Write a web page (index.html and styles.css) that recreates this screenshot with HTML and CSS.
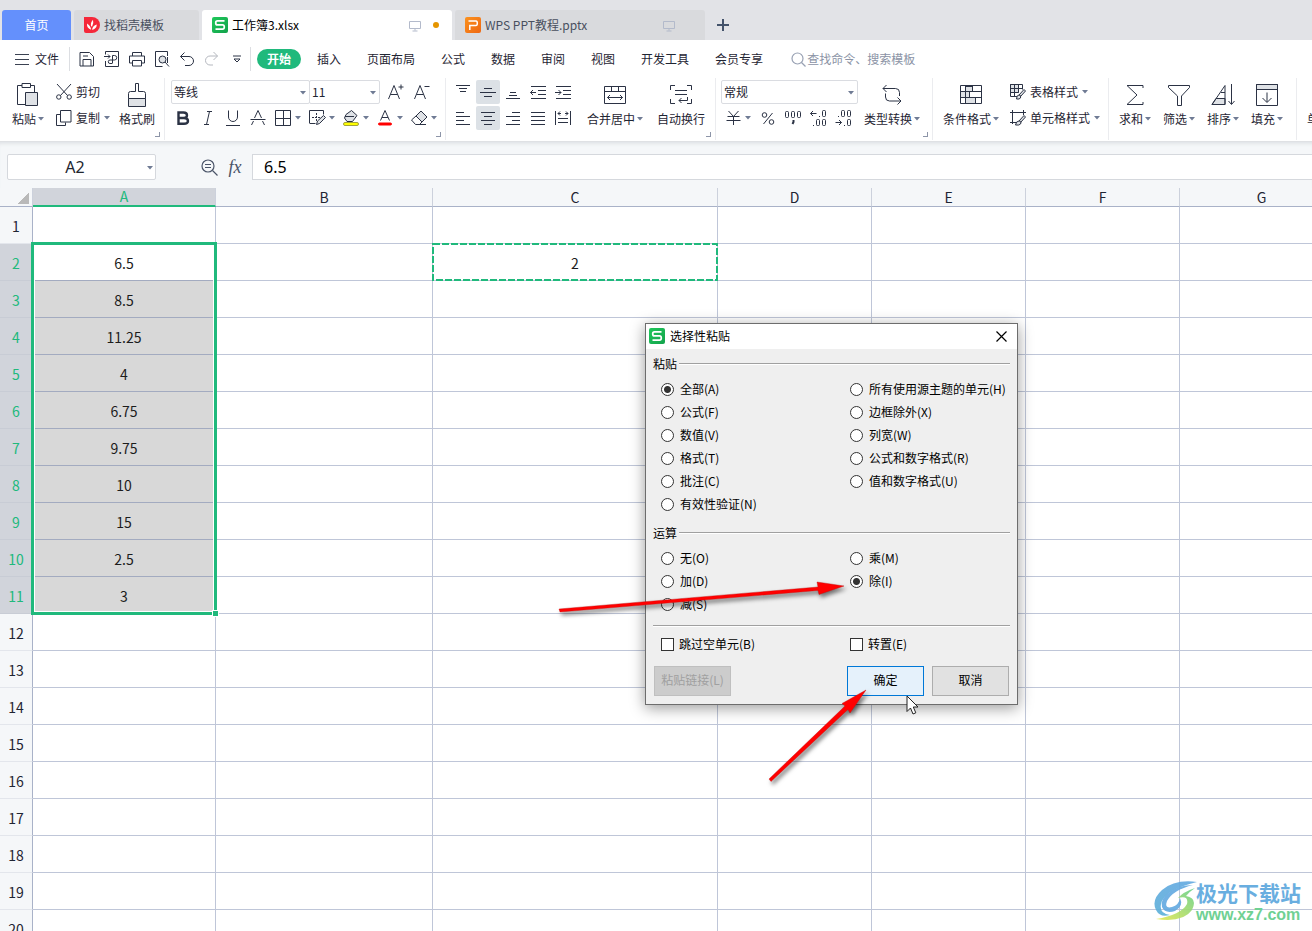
FILE: index.html
```html
<!DOCTYPE html>
<html lang="zh-CN">
<head>
<meta charset="utf-8">
<title>工作簿3.xlsx</title>
<link rel="stylesheet" href="styles.css">
</head>
<body>
<svg class="defs" aria-hidden="true">
  <defs>
    <linearGradient id="green" x1="0" y1="0" x2="1" y2="1"><stop offset="0" stop-color="#1fc85a"/><stop offset="1" stop-color="#13a24c"/></linearGradient>
    <linearGradient id="orange" x1="0" y1="0" x2="1" y2="1"><stop offset="0" stop-color="#fb921e"/><stop offset="1" stop-color="#ee6712"/></linearGradient>
    <linearGradient id="swirl" x1="0" y1="0" x2="0" y2="1"><stop offset="0" stop-color="#62a9e0"/><stop offset="1" stop-color="#5bb0d8"/></linearGradient>
    <linearGradient id="leaf" x1="0" y1="1" x2="1" y2="0"><stop offset="0" stop-color="#e8e84e"/><stop offset="1" stop-color="#62cf8c"/></linearGradient>
    <symbol id="sheet-logo" viewBox="0 0 16 16"><rect width="16" height="16" rx="2" fill="url(#green)"/><path d="M12.5 3.9H5.5Q3.7 3.9 3.7 5.9T5.5 7.9H10.5Q12.3 7.9 12.3 10T10.5 12.1H3.5" fill="none" stroke="#fff" stroke-width="1.7"/></symbol>
    <symbol id="monitor" viewBox="0 0 12 12"><path d="M.5 1.5h11v7H.5zM6 8.5v2M3.5 11h5" fill="none" stroke="currentColor"/></symbol>
    <symbol id="caret" viewBox="0 0 6 4"><path d="M0 0h6L3 3.5z" fill="#6f7b94"/></symbol>
  </defs>
</svg>

<header class="tabs">
  <button class="tab tab-home">首页</button>
  <button class="tab tab-docs"><svg width="16" height="16" viewBox="0 0 16 16"><path d="M0 0H8A8 8 0 0 1 8 16H2Q0 16 0 14z" fill="#f5283a"/><path d="M7.2 12.8Q2.6 11 3 6.4Q6.4 8.4 7.2 12.8zM7 9Q6.300 5.500 9 2.800Q10 6 8 9.800zM8 12.800Q8.800 8.500 12.800 7.500Q12.600 12 8 12.800z" fill="#fff"/></svg>找稻壳模板</button>
  <button class="tab tab-book active"><svg width="16" height="16"><use href="#sheet-logo"/></svg><span class="name">工作簿3.xlsx</span><svg class="screen" width="12" height="12"><use href="#monitor"/></svg><i class="dot"></i></button>
  <button class="tab tab-ppt"><svg width="16" height="16" viewBox="0 0 16 16"><rect width="16" height="16" rx="2" fill="url(#orange)"/><path d="M3.500 4H11Q12.300 4 12.300 6.300T11 8.600H4.800V13" fill="none" stroke="#fff" stroke-width="1.500"/></svg><span class="name">WPS PPT教程.pptx</span><svg class="screen" width="12" height="12"><use href="#monitor"/></svg></button>
  <button class="new-tab" aria-label="新建"><svg width="12" height="12" viewBox="0 0 12 12"><path d="M6 0v12M0 6h12" stroke="#44536b" stroke-width="2"/></svg></button>
</header>

<nav class="menu">
  <button class="file"><svg width="14" height="12" viewBox="0 0 14 12"><path d="M0 1.500h14M0 6.500h14M0 11.500h14" stroke="#3b4252"/></svg>文件</button>
  <div class="quick">
    <button aria-label="保存"><svg class="ic" width="16" height="16" viewBox="0 0 16 16"><path d="M1 1.500h9.500l4 4v9.500H1zM4 15V8.500h8V15M4 5h5"/></svg></button>
    <button aria-label="输出为PDF"><svg class="ic" width="16" height="16" viewBox="0 0 16 16"><path d="M1.500 3.500V.500h13v15h-13V10M0 5.500h6M4 3.500l2 2-2 2M8.500 12V4.500h2a2.200 2.200 0 0 1 0 4.500H6a1.700 1.700 0 0 0 0 3.500h2.500"/></svg></button>
    <button aria-label="打印"><svg class="ic" width="16" height="16" viewBox="0 0 16 16"><path d="M3.500 5V1.500h9V5M3.500 12H.500V5h15v7h-3M3.500 9.500h9V15h-9z"/></svg></button>
    <button aria-label="打印预览"><svg class="ic" width="16" height="16" viewBox="0 0 16 16"><path d="M13.500 5V.500H1.500v15h7"/><circle cx="8.500" cy="8.500" r="3.500" class="tint"/><path d="M13.500 6v6M11 11l4 4.500"/></svg></button>
    <button aria-label="撤销"><svg class="ic" width="16" height="16" viewBox="0 0 16 16"><path d="M5.500 1.500l-4 4 4 4M1.500 5.500h8.500a4.500 4.500 0 0 1 0 9H6"/></svg></button>
    <button aria-label="恢复"><svg class="ic faint" width="16" height="16" viewBox="0 0 16 16"><path d="M9.500 1l4 4-4 4M13.500 5H6a4.500 4.500 0 0 0 0 9h3"/></svg></button>
    <button aria-label="更多"><svg class="ic" width="8" height="8" viewBox="0 0 8 8"><path d="M0 1h8M1 4l3 3 3-3z"/></svg></button>
  </div>
  <div class="menu-tabs">
    <button class="current">开始</button><button>插入</button><button>页面布局</button><button>公式</button><button>数据</button><button>审阅</button><button>视图</button><button>开发工具</button><button>会员专享</button>
  </div>
  <label class="search"><svg width="15" height="15" viewBox="0 0 15 15"><circle cx="6.500" cy="6.500" r="5.500"/><path d="M10.500 10.500l4 4"/></svg><input type="text" placeholder="查找命令、搜索模板" aria-label="搜索"></label>
</nav>

<section class="ribbon">
  <div class="group g-clip">
    <button class="big"><svg class="ic" width="22" height="24" viewBox="0 0 22 24"><path d="M5 2.500H.500v19H8M14 2.500h3.500V9M5 .500h8.500v4H5z"/><path class="tint" d="M8.500 9.500h12v13h-12z"/></svg><span>粘贴<svg class="caret"><use href="#caret"/></svg></span></button>
    <div class="stack">
      <button class="line"><svg class="ic" width="16" height="16" viewBox="0 0 16 16"><path d="M1 0l10.500 11.500M15 0L4.500 11.500"/><circle cx="2.800" cy="13" r="2.200"/><circle cx="13.200" cy="13" r="2.200"/></svg>剪切</button>
      <button class="line"><svg class="ic" width="16" height="16" viewBox="0 0 16 16"><path d="M4.500 4.500h-4v11h9v-3M4.500.500h10.500v11.500H4.500z"/></svg>复制<svg class="caret"><use href="#caret"/></svg></button>
    </div>
    <button class="big"><svg class="ic" width="20" height="24" viewBox="0 0 20 24"><path d="M8.500.500h3v8h5q2 0 2 2v5H1.500v-5q0-2 2-2h5z"/><path class="tint" d="M1.500 15.500h17v8h-17z"/></svg><span>格式刷</span></button>
    <i class="launch"></i>
  </div>
  <div class="group g-font">
    <div class="stack">
      <div class="row combos">
        <span class="combo wide"><select aria-label="字体"><option>等线</option></select><svg class="caret"><use href="#caret"/></svg></span><span class="combo small"><select aria-label="字号"><option>11</option></select><svg class="caret"><use href="#caret"/></svg></span>
        <button class="sq" aria-label="增大字号"><svg class="ic" width="16" height="16" viewBox="0 0 16 16"><path d="M.500 15L6 1.500 11.500 15M2.500 10.500h7M10.500 3h5M13 .500v5"/></svg></button>
        <button class="sq" aria-label="减小字号"><svg class="ic" width="16" height="16" viewBox="0 0 16 16"><path d="M.500 15L6 1.500 11.500 15M2.500 10.500h7M10.500 2.500h5"/></svg></button>
      </div>
      <div class="row">
        <button class="sq" aria-label="加粗"><svg class="ic" width="14" height="16" viewBox="0 0 14 16"><path stroke-width="2.400" d="M2.500 2.500h5q3.500 0 3.500 2.700t-3.500 2.800h-5h5.500q4 0 4 2.900t-4 2.900h-5.500z"/></svg></button>
        <button class="sq" aria-label="倾斜"><svg class="ic" width="14" height="16" viewBox="0 0 14 16"><path d="M6 1.500h5M3 14.500h5M8.500 1.500l-3 13"/></svg></button>
        <button class="sq" aria-label="下划线"><svg class="ic" width="16" height="16" viewBox="0 0 16 16"><path d="M3.500.500v6.500a4.500 4.500 0 0 0 9 0V.500M1 15.500h14"/></svg></button>
        <button class="sq" aria-label="删除线"><svg class="ic" width="16" height="16" viewBox="0 0 16 16"><path d="M4.500 8L8 .500 11.500 8M.500 9.500h15M3.500 11L1.500 15M12.500 11l2 4"/></svg></button>
        <button class="drop" aria-label="边框"><svg class="ic" width="18" height="16" viewBox="0 0 18 16"><path d="M1.500.500h15v15h-15zM9.500.500v15M1.500 8.500h15"/></svg><svg class="caret"><use href="#caret"/></svg></button>
        <button class="drop" aria-label="绘图边框"><svg class="ic" width="18" height="16" viewBox="0 0 18 16"><path d="M1.500 13V.500h14v4M1.500 13.500h6"/><path stroke-dasharray="2 1" d="M8.500 3v8M4 7.500h8"/><path class="tint" d="M8.500 14.500l1-3.500 6-5.500 2 2-6 6z"/></svg><svg class="caret"><use href="#caret"/></svg></button>
        <button class="drop" aria-label="填充颜色"><svg class="ic" width="18" height="16" viewBox="0 0 18 16"><path class="tint" d="M4 4.500L9.500.500l5.500 5-4.500 6H5L2.500 8z"/><path d="M3 6.500h9"/><rect class="yellow" x="1.500" y="12.500" width="15" height="3" rx="1.500"/></svg><svg class="caret"><use href="#caret"/></svg></button>
        <button class="drop" aria-label="字体颜色"><svg class="ic" width="18" height="16" viewBox="0 0 18 16"><path d="M4.500 10.500L9 .500l4.500 10M6 7.500h6"/><rect class="red" x="2.500" y="13" width="13" height="2" rx="1"/></svg><svg class="caret"><use href="#caret"/></svg></button>
        <button class="drop" aria-label="清除"><svg class="ic" width="18" height="16" viewBox="0 0 18 16"><path class="tint" d="M6 6l5-5 6 6-5 5z"/><path d="M6 6l-4.500 4 4 4.500h4l2.500-2.500M9 14.500h7"/></svg><svg class="caret"><use href="#caret"/></svg></button>
      </div>
    </div>
    <i class="launch"></i>
  </div>
  <div class="group g-align">
    <div class="stack">
      <div class="row">
        <button class="sq" aria-label="顶端对齐"><svg class="ic" width="14" height="16" viewBox="0 0 14 16"><path d="M0 1.500h14M3 4.500h8M4 7.500h6"/></svg></button>
        <button class="sq on" aria-label="垂直居中"><svg class="ic" width="16" height="16" viewBox="0 0 16 16"><path d="M4 4.500h8M0 8.500h16M4 12.500h8"/></svg></button>
        <button class="sq" aria-label="底端对齐"><svg class="ic" width="14" height="16" viewBox="0 0 14 16"><path d="M4 8.500h6M3 11.500h8M0 14.500h14"/></svg></button>
        <button class="sq" aria-label="减少缩进"><svg class="ic" width="16" height="16" viewBox="0 0 16 16"><path d="M1 2.500h15M8 6.500h8M8 10.500h8M1 14.500h15M.500 8.500H6M3 6L.500 8.500 3 11"/></svg></button>
        <button class="sq" aria-label="增加缩进"><svg class="ic" width="16" height="16" viewBox="0 0 16 16"><path d="M1 2.500h15M8 6.500h8M8 10.500h8M1 14.500h15M0 8.500h6M3.500 6L6 8.500 3.500 11"/></svg></button>
      </div>
      <div class="row">
        <button class="sq" aria-label="左对齐"><svg class="ic" width="14" height="16" viewBox="0 0 14 16"><path d="M0 2.500h8M0 6.500h14M0 10.500h8M0 14.500h14"/></svg></button>
        <button class="sq on" aria-label="水平居中"><svg class="ic" width="14" height="16" viewBox="0 0 14 16"><path d="M0 2.500h14M3 6.500h8M0 10.500h14M3 14.500h8"/></svg></button>
        <button class="sq" aria-label="右对齐"><svg class="ic" width="14" height="16" viewBox="0 0 14 16"><path d="M6 2.500h8M0 6.500h14M6 10.500h8M0 14.500h14"/></svg></button>
        <button class="sq" aria-label="两端对齐"><svg class="ic" width="14" height="16" viewBox="0 0 14 16"><path d="M0 2.500h14M0 6.500h14M0 10.500h14M0 14.500h14"/></svg></button>
        <button class="sq" aria-label="分散对齐"><svg class="ic" width="16" height="16" viewBox="0 0 16 16"><path d="M.500 1v14M15.500 1v14M3 8.500h10M3 12.500h10M3 3.500h3M10 3.500h3M5 1.500l-2 2 2 2M11 1.500l2 2-2 2"/></svg></button>
      </div>
    </div>
    <button class="big"><svg class="ic" width="22" height="24" viewBox="0 0 22 24"><path d="M.500 3.500h21v17H.500zM.500 8.500h21M7.500 3.500v5M14.500 3.500v5M3.500 14.500h15M6 12l-2.500 2.500L6 17M16 12l2.500 2.500L16 17"/></svg><span>合并居中<svg class="caret"><use href="#caret"/></svg></span></button>
    <button class="big"><svg class="ic" width="22" height="24" viewBox="0 0 22 24"><path d="M5 2.500H.500V7M17 2.500h4.500V7M.500 16v4.500H5M21.500 16v4.500H17M5 7.500h12M5 11.500h12M17.500 14v3.500H9M11.500 15L9 17.500l2.500 2.500"/></svg><span>自动换行</span></button>
    <i class="launch"></i>
  </div>
  <div class="group g-num">
    <div class="stack">
      <div class="row"><span class="combo full"><select aria-label="数字格式"><option>常规</option></select><svg class="caret"><use href="#caret"/></svg></span></div>
      <div class="row">
        <button class="drop" aria-label="货币"><svg class="ic" width="18" height="16" viewBox="0 0 18 16"><path d="M4.500 1L9.500 6.500 14.500 1M3.500 6.500h12M2.500 10.500h14M9.500 6.500V15"/></svg><svg class="caret"><use href="#caret"/></svg></button>
        <button class="sq" aria-label="百分比"><svg class="ic" width="14" height="16" viewBox="0 0 14 16"><circle cx="3.500" cy="5" r="2.300"/><circle cx="10.500" cy="12" r="2.300"/><path d="M11.500 3L2.500 14"/></svg></button>
        <button class="sq" aria-label="千位分隔"><svg class="ic" width="18" height="16" viewBox="0 0 18 16"><rect x="1.500" y="1.500" width="3" height="6" rx="1"/><rect x="7.500" y="1.500" width="3" height="6" rx="1"/><rect x="13.500" y="1.500" width="3" height="6" rx="1"/><path stroke-width="2" d="M9.500 10v2l-1 2"/></svg></button>
        <button class="sq" aria-label="增加小数位"><svg class="ic" width="16" height="16" viewBox="0 0 16 16"><path d="M.500 3.500h6M3 1L.500 3.500 3 6M9 6.500h1M3 15.500h1"/><rect x="12.500" y=".500" width="3" height="6" rx="1"/><rect x="6.500" y="9.500" width="3" height="6" rx="1"/><rect x="12.500" y="9.500" width="3" height="6" rx="1"/></svg></button>
        <button class="sq" aria-label="减少小数位"><svg class="ic" width="16" height="16" viewBox="0 0 16 16"><path d="M.500 12.500h6M4 10l2.500 2.500L4 15M3 6.500h1M9 15.500h1"/><rect x="6.500" y=".500" width="3" height="6" rx="1"/><rect x="12.500" y=".500" width="3" height="6" rx="1"/><rect x="12.500" y="9.500" width="3" height="6" rx="1"/></svg></button>
      </div>
    </div>
    <button class="big"><svg class="ic" width="20" height="24" viewBox="0 0 20 24"><path d="M4.500 2L1 5.500 4.500 9M1 5.500h12.500q4 0 4 4V13M15.500 14.500L19 18l-3.500 3.500M19 18H7.500q-4 0-4-4v-3.500"/></svg><span>类型转换<svg class="caret"><use href="#caret"/></svg></span></button>
    <i class="launch"></i>
  </div>
  <div class="group g-style">
    <button class="big"><svg class="ic" width="22" height="24" viewBox="0 0 22 24"><path class="tint" d="M5.500 3.500h7v5h-7zM.500 8.500h9v6h-9zM5.500 14.500h10v6h-10z"/><path d="M.500 2.500h21v18H.500zM.500 8.500h21M.500 14.500h21M5.500 2.500v18M12.500 2.500v6M9.500 8.500v6M15.500 14.500v6"/></svg><span>条件格式<svg class="caret"><use href="#caret"/></svg></span></button>
    <div class="stack">
      <button class="line"><svg class="ic" width="16" height="16" viewBox="0 0 16 16"><path class="tint" d="M.500.500h8v8h-8z"/><path d="M7 12.500H.500V.500h12v5M4.500.500v12M8.500.500v8M.500 4.500h12M.500 8.500h7"/><path class="tint" d="M9 11l5-5.500 1.500 1.500-5 5.500M6.500 15q0-4 2.500-4t1.500 3q-1 1.500-4 1z"/></svg>表格样式<svg class="caret"><use href="#caret"/></svg></button>
      <button class="line"><svg class="ic" width="16" height="16" viewBox="0 0 16 16"><path d="M0 2.500h16M2.500 0v14M13.500 0v5M0 12.500h6"/><path class="tint" d="M9 11l5-5.500 1.500 1.500-5 5.500M5.500 15q.500-4 3.500-4t1.500 3q-1 1.500-5 1z"/></svg>单元格样式<svg class="caret"><use href="#caret"/></svg></button>
    </div>
  </div>
  <div class="group g-edit">
    <button class="big"><svg class="ic" width="20" height="24" viewBox="0 0 20 24"><path d="M18 5V2.500H2L12 12 2 21.500h16V19"/></svg><span>求和<svg class="caret"><use href="#caret"/></svg></span></button>
    <button class="big"><svg class="ic" width="22" height="24" viewBox="0 0 22 24"><path d="M.500 2.500h21v2l-8 8.500v9.500h-4V13L.500 4.500z"/></svg><span>筛选<svg class="caret"><use href="#caret"/></svg></span></button>
    <button class="big"><svg class="ic" width="24" height="24" viewBox="0 0 24 24"><path class="tint" d="M5 15.500h9v6H1z"/><path d="M14 2.500v19H1zM10 9.500h4M5 15.500h9M20.500 1v20M17.500 18l3 3.500 3-3.500"/></svg><span>排序<svg class="caret"><use href="#caret"/></svg></span></button>
    <button class="big"><svg class="ic" width="22" height="24" viewBox="0 0 22 24"><path class="tint" d="M.500 1.500h21v5H.500z"/><path d="M.500 1.500h21v21H.500zM11 9.500V19M6.500 15l4.500 4.500 4.500-4.500"/></svg><span>填充<svg class="caret"><use href="#caret"/></svg></span></button>
  </div>
  <div class="group g-cell"><button class="big"><svg class="ic" width="22" height="24"></svg><span>单元格</span></button></div>
</section>

<section class="formula">
  <span class="namebox"><input type="text" value="A2" aria-label="名称框"><svg class="caret"><use href="#caret"/></svg></span>
  <button class="find" aria-label="查找"><svg width="17" height="17" viewBox="0 0 17 17"><circle cx="7" cy="7" r="6"/><path d="M11.500 11.500l5 5M4 5.500h6M4 8.500h6"/></svg></button>
  <button class="fx">fx</button>
  <input class="content" type="text" value="6.5" aria-label="编辑栏">
</section>

<main class="sheet">
  <table>
    <colgroup><col class="c-head"><col class="c-a"><col class="c-b"><col class="c-c"><col class="c-d"><col class="c-d"><col class="c-d"><col class="c-g"></colgroup>
    <thead><tr><th class="corner"></th><th class="sel">A</th><th>B</th><th>C</th><th>D</th><th>E</th><th>F</th><th>G</th></tr></thead>
    <tbody>
      <tr><th>1</th><td></td><td></td><td></td><td></td><td></td><td></td><td></td></tr>
      <tr class="hit first"><th>2</th><td>6.5</td><td></td><td>2</td><td></td><td></td><td></td><td></td></tr>
      <tr class="hit"><th>3</th><td>8.5</td><td></td><td></td><td></td><td></td><td></td><td></td></tr>
      <tr class="hit"><th>4</th><td>11.25</td><td></td><td></td><td></td><td></td><td></td><td></td></tr>
      <tr class="hit"><th>5</th><td>4</td><td></td><td></td><td></td><td></td><td></td><td></td></tr>
      <tr class="hit"><th>6</th><td>6.75</td><td></td><td></td><td></td><td></td><td></td><td></td></tr>
      <tr class="hit"><th>7</th><td>9.75</td><td></td><td></td><td></td><td></td><td></td><td></td></tr>
      <tr class="hit"><th>8</th><td>10</td><td></td><td></td><td></td><td></td><td></td><td></td></tr>
      <tr class="hit"><th>9</th><td>15</td><td></td><td></td><td></td><td></td><td></td><td></td></tr>
      <tr class="hit"><th>10</th><td>2.5</td><td></td><td></td><td></td><td></td><td></td><td></td></tr>
      <tr class="hit"><th>11</th><td>3</td><td></td><td></td><td></td><td></td><td></td><td></td></tr>
      <tr><th>12</th><td></td><td></td><td></td><td></td><td></td><td></td><td></td></tr>
      <tr><th>13</th><td></td><td></td><td></td><td></td><td></td><td></td><td></td></tr>
      <tr><th>14</th><td></td><td></td><td></td><td></td><td></td><td></td><td></td></tr>
      <tr><th>15</th><td></td><td></td><td></td><td></td><td></td><td></td><td></td></tr>
      <tr><th>16</th><td></td><td></td><td></td><td></td><td></td><td></td><td></td></tr>
      <tr><th>17</th><td></td><td></td><td></td><td></td><td></td><td></td><td></td></tr>
      <tr><th>18</th><td></td><td></td><td></td><td></td><td></td><td></td><td></td></tr>
      <tr><th>19</th><td></td><td></td><td></td><td></td><td></td><td></td><td></td></tr>
      <tr><th>20</th><td></td><td></td><td></td><td></td><td></td><td></td><td></td></tr>
    </tbody>
  </table>
  <div class="selection"><i></i></div>
  <svg class="marquee" width="286" height="38"><rect x="1" y="1" width="284" height="36"/></svg>

  <form class="dialog" role="dialog" aria-label="选择性粘贴">
    <div class="title"><svg width="16" height="16"><use href="#sheet-logo"/></svg><span>选择性粘贴</span><button type="button" aria-label="关闭"><svg width="11" height="11" viewBox="0 0 11 11"><path d="M.500.500l10 10M10.500.500l-10 10" stroke="#000" stroke-width="1.200"/></svg></button></div>
    <div class="body">
      <div class="legend">粘贴</div>
      <div class="options six">
        <label><input type="radio" name="paste" checked>全部(A)</label>
        <label><input type="radio" name="paste">公式(F)</label>
        <label><input type="radio" name="paste">数值(V)</label>
        <label><input type="radio" name="paste">格式(T)</label>
        <label><input type="radio" name="paste">批注(C)</label>
        <label><input type="radio" name="paste">有效性验证(N)</label>
        <label><input type="radio" name="paste">所有使用源主题的单元(H)</label>
        <label><input type="radio" name="paste">边框除外(X)</label>
        <label><input type="radio" name="paste">列宽(W)</label>
        <label><input type="radio" name="paste">公式和数字格式(R)</label>
        <label><input type="radio" name="paste">值和数字格式(U)</label>
      </div>
      <div class="legend second">运算</div>
      <div class="options three">
        <label><input type="radio" name="op">无(O)</label>
        <label><input type="radio" name="op">加(D)</label>
        <label><input type="radio" name="op">减(S)</label>
        <label><input type="radio" name="op">乘(M)</label>
        <label><input type="radio" name="op" checked>除(I)</label>
      </div>
      <hr>
      <div class="options one">
        <label><input type="checkbox">跳过空单元(B)</label>
        <label><input type="checkbox">转置(E)</label>
      </div>
      <div class="actions">
        <button type="button" class="link" disabled>粘贴链接(L)</button>
        <button type="button" class="ok">确定</button>
        <button type="button">取消</button>
      </div>
    </div>
  </form>

  <svg class="arrows" width="320" height="220" viewBox="550 570 320 220" aria-hidden="true">
    <path d="M559 609L818 587L817 582L844 586L819 594.500L818 590.500L560 612z"/>
    <path d="M769 779L845 706L842 703.500L866 690L850 713L848 709.500L771 781.500z"/>
  </svg>
  <svg class="pointer" width="14" height="20" viewBox="0 0 14 20" aria-hidden="true"><path d="M1 1v15.500l3.500-3.500 2.500 6 2.800-1.200-2.500-5.800h4.700z" fill="#fff" stroke="#222"/></svg>

  <div class="watermark">
    <svg width="46" height="42" viewBox="0 0 46 42"><path d="M44 2Q22-1 9 10Q-2 20 3 30Q7 38 17 35Q6 34 8 24Q11 10 44 2z" fill="url(#swirl)"/><path d="M40 5Q20 10 14 21Q11 29 19 27Q26 25 27 18Q31 26 22 31Q12 34 9 27Q7 18 18 11Q27 5 40 5z" fill="#62a9e0"/><path d="M42 8Q30 12 25 18Q36 15 34 24Q28 35 3 39Q30 43 39 30Q45 18 33 16Q36 12 42 8z" fill="url(#leaf)"/></svg>
    <div><b>极光下载站</b><span>www.xz7.com</span></div>
  </div>
</main>
</body>
</html>
```

FILE: styles.css
```css
*, *::after { box-sizing: border-box; }
html, body { height: 100%; }
body { margin: 0; display: flex; flex-direction: column; overflow: hidden; background: #fff; color: #1f2533; font: 12px/18px "Noto Sans CJK SC", sans-serif; }
button, input, select { font: inherit; color: inherit; margin: 0; padding: 0; border: 0; background: none; border-radius: 0; outline: 0; }
button { white-space: nowrap; }
svg { display: block; flex: none; }
.defs { position: absolute; width: 0; height: 0; }
.ic { fill: none; stroke: #2b3244; }
.ic .tint { fill: #dfe2e6; }
.ic .yellow { fill: #ff0; stroke: #a3a33c; }
.ic .red { fill: #f00; stroke: #f00; }
.ic.faint { stroke: #b5b8bf; }
.caret { width: 6px; height: 4px; }

/* document tabs */
.tabs { flex: none; display: flex; gap: 3px; height: 40px; padding: 10px 2px 0; background: #e2e3e7; }
.tab { display: flex; align-items: center; height: 30px; border-radius: 3px 3px 0 0; background: #d9dadd; color: #49505f; }
.tab svg { margin-right: 4px; }
.tab-home { width: 69px; justify-content: center; background: #6490fc; color: #fff; }
.tab-docs { width: 125px; padding-left: 10px; }
.tab-book, .tab-ppt { width: 250px; padding-left: 10px; }
.tab.active { background: #fff; color: #000; }
.tab .screen { margin: 2px 12px 0 auto; color: #b3bacb; }
.tab-ppt .screen { margin-right: 30px; }
.dot { width: 6px; height: 6px; margin-right: 13px; border-radius: 50%; background: #e59500; }
.new-tab { width: 30px; display: flex; align-items: center; justify-content: center; }

/* menu */
.menu { flex: none; display: flex; align-items: center; height: 38px; }
.file { display: flex; align-items: center; gap: 6px; width: 70px; height: 24px; padding-left: 15px; border-right: 1px solid #dcdee2; }
.quick { display: flex; align-items: center; width: 181px; height: 24px; padding-left: 4px; border-right: 1px solid #dcdee2; }
.quick button { width: 25px; height: 24px; display: flex; align-items: center; justify-content: center; }
.menu-tabs { display: flex; gap: 26px; padding-left: 6px; }
.menu-tabs .current { width: 44px; height: 20px; margin-right: -10px; border-radius: 10px; background: #20b97c; color: #fff; font-weight: 700; }
.search { display: flex; align-items: center; gap: 1px; margin-left: 28px; }
.search svg { fill: none; stroke: #98a1b3; stroke-width: 1.2; }
.search input { width: 130px; }
.search input::placeholder { color: #8b93a5; opacity: 1; }

/* ribbon */
.ribbon { flex: none; display: flex; height: 64px; border-bottom: 1px solid #dfe1e4; overflow: hidden; }
.group { flex: none; position: relative; display: flex; align-items: flex-start; height: 62px; padding-top: 2px; border-right: 1px solid #ebecef; }
.stack { display: flex; flex-direction: column; gap: 2px; }
.row { display: flex; gap: 1px; height: 24px; align-items: center; }
.big { display: flex; flex-direction: column; align-items: center; gap: 2px; padding-top: 3px; }
.big span { display: flex; align-items: center; height: 20px; gap: 2px; }
.line { display: flex; align-items: center; gap: 4px; height: 24px; }
.sq { width: 24px; height: 24px; display: flex; align-items: center; justify-content: center; border-radius: 2px; }
.sq.on { background: #dce1e6; }
.drop { display: flex; align-items: center; gap: 3px; width: 34px; height: 24px; margin-right: -1px; padding-left: 3px; }
.combo { position: relative; height: 24px; border: 1px solid #dadce1; border-radius: 2px; }
.combo select { width: 100%; height: 22px; padding-left: 2px; appearance: none; }
.combo .caret { position: absolute; right: 3px; top: 10px; }
.combo.wide { width: 139px; margin-right: -2px; }
.combo.small { width: 71px; }
.combo.full { width: 137px; }
.combos .sq { margin-left: 3px; margin-right: -2px; }
.launch { position: absolute; right: 4px; bottom: 3px; width: 5px; height: 5px; border: solid #8d95a8; border-width: 0 1px 1px 0; }
.g-clip { width: 165px; padding-left: 12px; }
.g-clip .stack { margin: 0 9px 0 12px; }
.g-font { width: 281px; padding-left: 6px; }
.g-align { width: 270px; padding-left: 5px; }
.g-align .stack { margin-right: 12px; }
.g-align .big + .big { margin-left: 14px; }
.g-num { width: 217px; padding-left: 5px; }
.g-num .stack { margin-right: 6px; }
.g-num .drop { margin-right: 0; }
.g-style { width: 176px; padding-left: 10px; }
.g-style .stack { margin-left: 11px; }
.g-edit { width: 188px; padding-left: 10px; gap: 12px; }
.g-cell { padding-left: 10px; }

/* formula bar */
.formula { flex: none; display: flex; align-items: center; height: 46px; padding: 4px 0 0 7px; background: #f5f7f9; box-shadow: inset 0 4px 4px -3px #d9dce0; color: #000; }
.namebox { position: relative; width: 149px; height: 26px; background: #fff; border: 1px solid #d5d8dd; border-radius: 2px; }
.namebox input { display: block; width: 134px; height: 24px; text-align: center; font: 16px/24px "Noto Sans", sans-serif; color: #22262f; }
.namebox .caret { position: absolute; right: 2px; top: 11px; }
.find { margin-left: 45px; }
.find svg { fill: none; stroke: #4a5468; stroke-width: 1.2; }
.fx { width: 34px; font: italic 18px/24px "Liberation Serif", serif; color: #4a5468; }
.content { flex: 1; height: 26px; padding-left: 11px; background: #fff; border: 1px solid #d5d8dd; border-right: 0; font: 16px/24px "Noto Sans", sans-serif; }

/* grid */
.sheet { flex: 1; position: relative; overflow: hidden; min-height: 0; }
table { table-layout: fixed; width: 1344px; border-collapse: separate; border-spacing: 0; }
.c-head { width: 33px; } .c-a { width: 183px; } .c-b { width: 217px; } .c-c { width: 285px; } .c-d { width: 154px; } .c-g { width: 164px; }
th, td { height: 37px; padding: 0; text-align: center; font-size: 14px; font-weight: 400; line-height: 20px; }
td { border: solid #bfc6d8; border-width: 0 1px 1px 0; padding-top: 2px; color: #1c1c1c; }
thead th { height: 19px; line-height: 17px; background: #f5f7f9; border-right: 1px solid #ccd1dc; border-bottom: 1px solid #a9b2c8; }
thead .sel { background: #d1d4db; color: #20b97c; border-bottom: 2px solid #20b97c; }
tbody th { background: #f5f7f9; padding-top: 2px; border-right: 1px solid #a9b2c8; border-bottom: 1px solid #e3e6ec; }
thead .corner { background: linear-gradient(135deg, transparent 50%, #b9b9b9 50%) 18px 5px / 11px 11px no-repeat #f5f7f9; }
.hit th { background: #d1d4db; color: #20b97c; border-bottom-color: #c8ccd5; }
.hit td:nth-child(2) { background: #d8d8d8; border-bottom-color: #a3abc0; }
.hit.first td:nth-child(2) { background: #fff; }
.selection { position: absolute; left: 31px; top: 54px; width: 186px; height: 373px; border: 3px solid #20b97c; box-shadow: inset 0 0 0 1px #fff; }
.selection i { position: absolute; right: -5px; bottom: -5px; width: 7px; height: 7px; background: #20b97c; border: 1px solid #fff; }
.marquee { position: absolute; left: 432px; top: 55px; fill: none; stroke: #20b97c; stroke-width: 2; stroke-dasharray: 7 2; }

/* paste special dialog */
.dialog { position: absolute; left: 645px; top: 135px; width: 373px; border: 1px solid #6d6d6d; background: #efefef; box-shadow: 0 3px 14px #0006; color: #000; }
.title { display: flex; align-items: center; gap: 5px; height: 25px; padding: 0 10px 1px 3px; background: #fff; }
.title button { margin-left: auto; }
.body { padding: 5px 7px 8px; }
.legend { display: flex; align-items: center; gap: 2px; height: 20px; margin-bottom: 4px; }
.legend::after { content: ""; flex: 1; height: 2px; background: #a0a0a0; border-bottom: 1px solid #fff; }
.legend.second { margin-top: 7px; }
.options { display: grid; grid-auto-flow: column; grid-template-columns: 189px 1fr; grid-auto-rows: 23px; padding-left: 8px; }
.six { grid-template-rows: repeat(6, 23px); }
.three { grid-template-rows: repeat(3, 23px); }
.one { grid-template-rows: 23px; }
.options label { display: flex; align-items: center; gap: 6px; padding-bottom: 1px; white-space: nowrap; }
.one label { gap: 5px; }
.options input { appearance: none; flex: none; width: 13px; height: 13px; border: 1px solid #333; background: #fff; }
.options input[type=radio] { border-radius: 50%; }
.options input[type=radio]:checked { background: radial-gradient(circle, #333 3px, #fff 4px); }
hr { height: 2px; margin: 9px 0 6px; border: 0; background: #a0a0a0; border-bottom: 1px solid #fff; }
.actions { display: flex; gap: 8px; margin-top: 10px; padding: 0 1px; }
.actions button { width: 77px; height: 30px; padding-bottom: 2px; background: #e1e1e1; border: 1px solid #adadad; }
.actions .link { margin-right: auto; background: #ccc; border-color: #bfbfbf; color: #a0a0a0; }
.actions .ok { background: #e5f1fb; border-color: #0078d7; }

.arrows { position: absolute; left: 550px; top: 382px; fill: #f00; stroke: #c01010; stroke-width: .4; filter: drop-shadow(2px 3px 2px #0008); pointer-events: none; }
.pointer { position: absolute; left: 906px; top: 507px; }

.watermark { position: absolute; right: 11px; bottom: 7px; display: flex; align-items: center; }
.watermark svg { margin-right: -3px; opacity: .9; }
.watermark div { display: flex; flex-direction: column; }
.watermark b { font-size: 21px; line-height: 28px; color: #69aee0; }
.watermark span { font: 700 16px/18px "Liberation Sans", sans-serif; color: #6fd193; }
```
